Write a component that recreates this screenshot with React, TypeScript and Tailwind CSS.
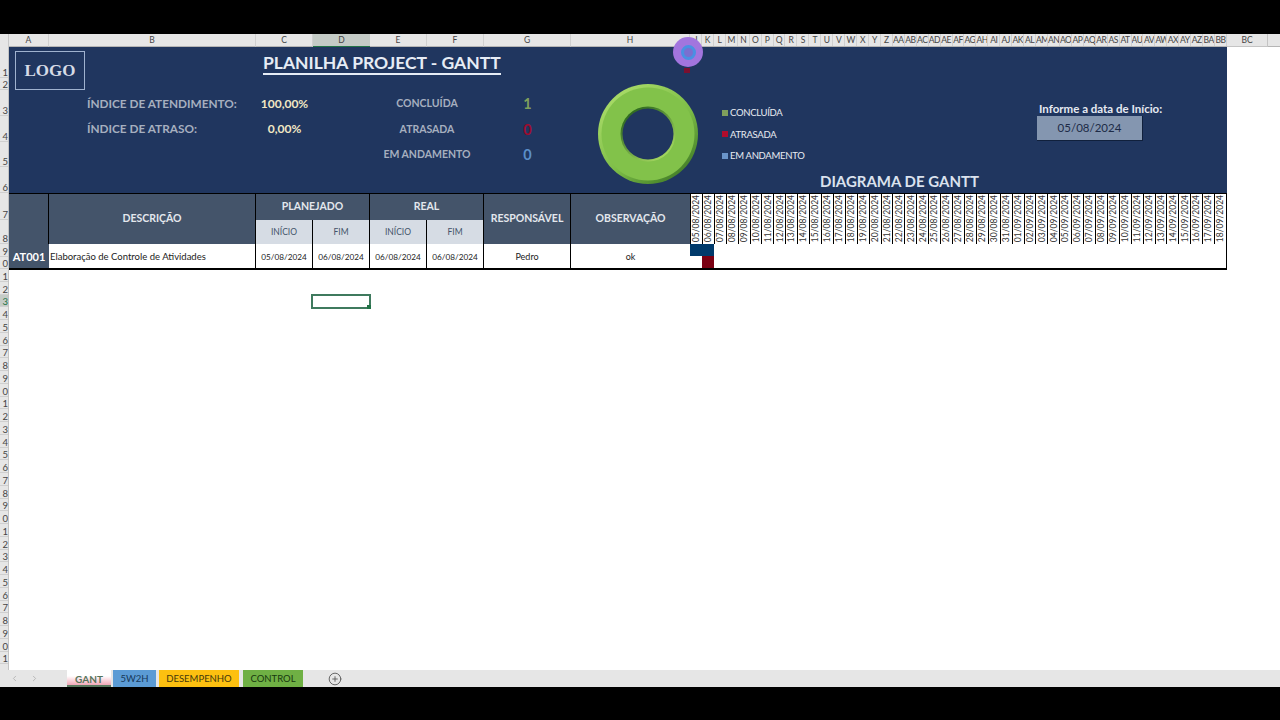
import { ChevronLeft, ChevronRight, CirclePlus } from "lucide-react";

const topCols = [
  { name: "A", width: "w-[40px]" },
  { name: "B", width: "w-[207px]" },
  { name: "C", width: "w-[57px]" },
  { name: "D", width: "w-[57px]", active: true },
  { name: "E", width: "w-[57px]" },
  { name: "F", width: "w-[57px]" },
  { name: "G", width: "w-[87px]" },
  { name: "H", width: "w-[119px]" },
];

const ganttCols =
  "J K L M N O P Q R S T U V W X Y Z AA AB AC AD AE AF AG AH AI AJ AK AL AM AN AO AP AQ AR AS AT AU AV AW AX AY AZ BA BB".split(
    " ",
  );

const dates = [
  ...Array.from({ length: 27 }, (_, i) => `${String(i + 5).padStart(2, "0")}/08/2024`),
  ...Array.from({ length: 18 }, (_, i) => `${String(i + 1).padStart(2, "0")}/09/2024`),
];

// first ten rows have custom heights, the rest are the default
const firstRows = ["h-[31px]", "h-[12px]", "h-[26px]", "h-[26px]", "h-[25px]", "h-[26px]", "h-[27px]", "h-[24px]", "h-[13px]", "h-[12px]"];
const rowNumbers = Array.from({ length: 31 }, (_, i) => i + 11);

const kpis = [
  { label: "CONCLUÍDA", value: "1", row: "row-start-3", color: "text-[#7f9f5c]" },
  { label: "ATRASADA", value: "0", row: "row-start-4", color: "text-[#9c0b2e]" },
  { label: "EM ANDAMENTO", value: "0", row: "row-start-5", color: "text-[#5b8fc9]" },
];

const legend = [
  { label: "CONCLUÍDA", color: "bg-[#7f9f5c]" },
  { label: "ATRASADA", color: "bg-[#b00c2c]" },
  { label: "EM ANDAMENTO", color: "bg-[#6a94c8]" },
];

const tabs = [
  { label: "5W2H", className: "w-[43px] bg-[#5b9bd5] text-[#16375a]" },
  { label: "DESEMPENHO", className: "w-[80px] bg-[#fdc010] text-[#44380c]" },
  { label: "CONTROL", className: "ml-[1px] w-[60px] bg-[#6fb044] text-[#17380f]" },
];

function Donut() {
  return (
    <svg width="102" height="102" viewBox="0 0 102 102" className="shrink-0">
      <defs>
        <linearGradient id="ringEdge" x1="0.15" y1="0.1" x2="0.85" y2="0.95">
          <stop offset="0" stopColor="#a9db68" />
          <stop offset="0.55" stopColor="#7dbd47" />
          <stop offset="1" stopColor="#3f7a26" />
        </linearGradient>
        <linearGradient id="holeEdge" x1="0.2" y1="0.1" x2="0.8" y2="0.9">
          <stop offset="0" stopColor="#2f6a20" />
          <stop offset="1" stopColor="#a3d65f" />
        </linearGradient>
      </defs>
      <circle cx="51" cy="51" r="50" fill="url(#ringEdge)" />
      <circle cx="51" cy="51" r="46.5" fill="#82c24a" />
      <circle cx="51" cy="51" r="27.5" fill="url(#holeEdge)" />
      <circle cx="51" cy="51" r="25.5" fill="#20365f" />
    </svg>
  );
}

export default function App() {
  return (
    <div className="relative flex h-[720px] w-[1280px] flex-col overflow-hidden bg-black font-['Lato',sans-serif]">
      <div className="h-[34px] shrink-0" />

      {/* column letters */}
      <div className="flex h-[13px] shrink-0 bg-[#e6e6e6] text-[8.5px] leading-[12px] text-[#444]">
        <div className="w-[9px] border-r border-[#c8c8c8]" />
        {topCols.map((c) => (
          <div
            key={c.name}
            className={`${c.width} border-b text-center ${c.active ? "border-[#217346] bg-[#c4cbc6]" : "border-b-[#b5b5b5] border-r border-r-[#d0d0d0]"}`}
          >
            {c.name}
          </div>
        ))}
        <div className="grid w-[537px] grid-cols-[repeat(45,1fr)] border-b border-[#b5b5b5]">
          {ganttCols.map((c) => (
            <div key={c} className="overflow-hidden whitespace-nowrap border-r border-[#cfcfcf] text-center tracking-[-0.5px]">
              {c}
            </div>
          ))}
        </div>
        <div className="w-[41px] border-b border-r border-[#c4c4c4] text-center">BC</div>
        <div className="flex-1 border-b border-[#b5b5b5]" />
      </div>

      <div className="flex h-[623px] shrink-0 bg-white">
        {/* row numbers, only the last digit fits in the gutter */}
        <div className="h-full w-[9px] shrink-0 overflow-hidden border-r border-[#c4c4c4] bg-[#e6e6e6] text-[9.5px] leading-[9px] text-[#444]">
          {firstRows.map((h, i) => (
            <div key={i} className={`${h} flex items-end justify-end border-b border-[#cfcfcf]`}>
              <span>{(i + 1) % 10}</span>
            </div>
          ))}
          {rowNumbers.map((n) => (
            <div
              key={n}
              className={`flex h-[12.75px] items-end justify-end border-b border-[#cfcfcf] ${n === 13 ? "bg-[#c4cbc6] text-[#217346]" : ""}`}
            >
              <span>{n % 10}</span>
            </div>
          ))}
        </div>

        <div className="w-[1218px] shrink-0">
          {/* navy dashboard panel */}
          <div className="grid h-[146px] grid-cols-[40px_207px_57px_57px_57px_57px_87px_119px_537px] grid-rows-[31px_12px_26px_26px_25px_26px] bg-[#20365f]">
            <div className="col-start-1 col-span-2 row-start-1 row-span-2 ml-[6px] mt-[4px] flex h-[39px] w-[70px] items-center justify-center border border-[#9fb2cf] font-['Liberation_Serif',serif] text-[17px] font-bold text-[#d5dbe6]">
              LOGO
            </div>
            <div className="col-start-3 col-span-6 row-start-1 flex items-start pl-[7px] pt-[6px]">
              <span className="border-b-2 border-[#e6ecf5] text-[17.5px] font-bold leading-[20px] text-[#e6ecf5]">
                PLANILHA PROJECT - GANTT
              </span>
            </div>

            <div className="col-start-2 row-start-3 flex items-end pb-[6px] pl-[38px] text-[11.8px] font-bold leading-none text-[#a6afbf]">
              ÍNDICE DE ATENDIMENTO:
            </div>
            <div className="col-start-3 row-start-3 flex items-end justify-center pb-[6px] text-[12px] font-bold leading-none text-[#f2e8c4]">
              100,00%
            </div>
            <div className="col-start-2 row-start-4 flex items-end pb-[7px] pl-[38px] text-[11.8px] font-bold leading-none text-[#a6afbf]">
              ÍNDICE DE ATRASO:
            </div>
            <div className="col-start-3 row-start-4 flex items-end justify-center pb-[7px] text-[12px] font-bold leading-none text-[#f2e8c4]">
              0,00%
            </div>

            {kpis.map((k) => (
              <div
                key={k.label}
                className={`${k.row} col-start-5 col-span-2 flex items-end justify-center pb-[8px] text-[10.5px] font-bold leading-none text-[#a6afbf]`}
              >
                {k.label}
              </div>
            ))}
            {kpis.map((k) => (
              <div
                key={k.label}
                className={`${k.row} ${k.color} col-start-7 flex items-end justify-center pb-[5px] text-[14.5px] font-bold leading-none`}
              >
                {k.value}
              </div>
            ))}

            <div className="col-start-8 col-span-2 row-start-2 row-span-5 flex items-start gap-[23px] pl-[26px] pt-[5px]">
              <Donut />
              <div className="mt-[19px] flex flex-col text-[9.5px] leading-[21.5px] tracking-[-0.3px] text-[#e8ecf2]">
                {legend.map((l) => (
                  <div key={l.label} className="flex items-center gap-[2px]">
                    <span className={`${l.color} h-[6px] w-[6px]`} />
                    {l.label}
                  </div>
                ))}
              </div>
            </div>

            <div className="col-start-9 row-start-3 flex items-end pb-[2px] pl-[349px] text-[11.5px] font-bold leading-none text-[#e6eaf2]">
              Informe a data de Início:
            </div>
            <div className="col-start-9 row-start-4 ml-[347px] flex h-[25px] w-[106px] items-center justify-center border-b border-r border-[#10203c] bg-[#8496b0] text-[11.5px] text-[#1d2b47]">
              05/08/2024
            </div>
            <div className="col-start-9 row-start-6 flex items-end justify-center pb-[4px] pr-[118px] text-[15px] font-bold leading-none text-[#dbe2ee]">
              DIAGRAMA DE GANTT
            </div>
          </div>

          {/* table */}
          <div className="grid h-[77px] grid-cols-[40px_207px_57px_57px_57px_57px_87px_119px_537px] grid-rows-[26px_24px_26px] border-t border-black text-[10.5px] font-bold text-white">
            <div className="row-span-2 border-r border-black bg-[#44546a]" />
            <div className="row-span-2 flex items-center justify-center border-r border-black bg-[#44546a] text-[#e3e7ed]">DESCRIÇÃO</div>
            <div className="col-span-2 flex items-center justify-center border-r border-black bg-[#44546a] text-[#e3e7ed]">PLANEJADO</div>
            <div className="col-span-2 flex items-center justify-center border-r border-black bg-[#44546a] text-[#e3e7ed]">REAL</div>
            <div className="row-span-2 flex items-center justify-center border-r border-black bg-[#44546a] text-[#e3e7ed]">RESPONSÁVEL</div>
            <div className="row-span-2 flex items-center justify-center bg-[#44546a] text-[#e3e7ed]">OBSERVAÇÃO</div>

            {/* gantt date header */}
            <div className="row-span-2 grid grid-cols-[repeat(45,1fr)] border-r border-black bg-white font-normal text-[#333]">
              {dates.map((d) => (
                <div key={d} className="flex items-center justify-center overflow-hidden border-l border-black">
                  <span className="rotate-180 text-[8.5px] leading-none [writing-mode:vertical-rl]">{d}</span>
                </div>
              ))}
            </div>

            {["INÍCIO", "FIM", "INÍCIO", "FIM"].map((t, i) => (
              <div
                key={i}
                className="flex items-center justify-center border-r border-r-black bg-[#d6dce4] text-[8.5px] font-normal text-[#44546a]"
              >
                {t}
              </div>
            ))}

            {/* data row */}
            <div className="flex items-center justify-center border-b-2 border-black bg-[#44546a] pt-[2px] text-[11px]">AT001</div>
            <div className="flex items-center border-b-2 border-r border-black bg-white pl-[1px] pt-[2px] text-[9.5px] font-normal text-[#222]">
              Elaboração de Controle de Atividades
            </div>
            {["05/08/2024", "06/08/2024", "06/08/2024", "06/08/2024"].map((d, i) => (
              <div key={i} className="flex items-center justify-center border-b-2 border-r border-black bg-white pt-[2px] text-[8.2px] font-normal text-[#222]">
                {d}
              </div>
            ))}
            <div className="flex items-center justify-center border-b-2 border-r border-black bg-white pt-[2px] text-[9px] font-normal text-[#222]">Pedro</div>
            <div className="flex items-center justify-center border-b-2 border-black bg-white pt-[2px] text-[9px] font-normal text-[#222]">ok</div>
            <div className="grid grid-cols-[repeat(45,1fr)] grid-rows-2 border-b-2 border-r border-black bg-white">
              <div className="col-span-2 bg-[#003a6b]" />
              <div className="col-span-43" />
              <div />
              <div className="bg-[#7a0012]" />
            </div>
          </div>

          {/* selected cell D13 */}
          <div className="relative ml-[302px] mt-[24px] h-[15px] w-[60px] border-2 border-[#3f7a5e]">
            <span className="absolute -bottom-[2px] -right-[2px] h-[4px] w-[4px] bg-[#217346]" />
          </div>
        </div>
      </div>

      {/* sheet tabs */}
      <div className="flex h-[17px] shrink-0 items-stretch bg-[#e6e6e6] text-[9.5px] leading-[16px]">
        <div className="flex w-[67px] items-center gap-[11px] pl-[10px] text-[#aaa]">
          <ChevronLeft size={9} strokeWidth={2} />
          <ChevronRight size={9} strokeWidth={2} />
        </div>
        <div className="w-[44px] border-b-2 border-[#5a7a5f] bg-gradient-to-b from-white from-40% to-[#f0a8b8] pt-[1px] text-center text-[10px] font-bold text-[#55745a]">
          GANT
        </div>
        <div className="flex gap-[3px] pl-[2px]">
          {tabs.map((t) => (
            <div key={t.label} className={`${t.className} pt-[1px] text-center`}>
              {t.label}
            </div>
          ))}
        </div>
        <div className="flex items-center pl-[25px] text-[#555]">
          <CirclePlus size={14} strokeWidth={1.5} />
        </div>
      </div>

      {/* recording cursor highlight on top of the sheet */}
      <div className="absolute left-[673px] top-[37px] flex h-[30px] w-[30px] items-center justify-center rounded-full bg-[#a275de]">
        <span className="h-[15px] w-[15px] rounded-full border-[3px] border-[#4a90e2] bg-[#7a6fd0]" />
      </div>
      <span className="absolute left-[684px] top-[68px] h-[5px] w-[6px] bg-[#7a1030]" />
    </div>
  );
}
